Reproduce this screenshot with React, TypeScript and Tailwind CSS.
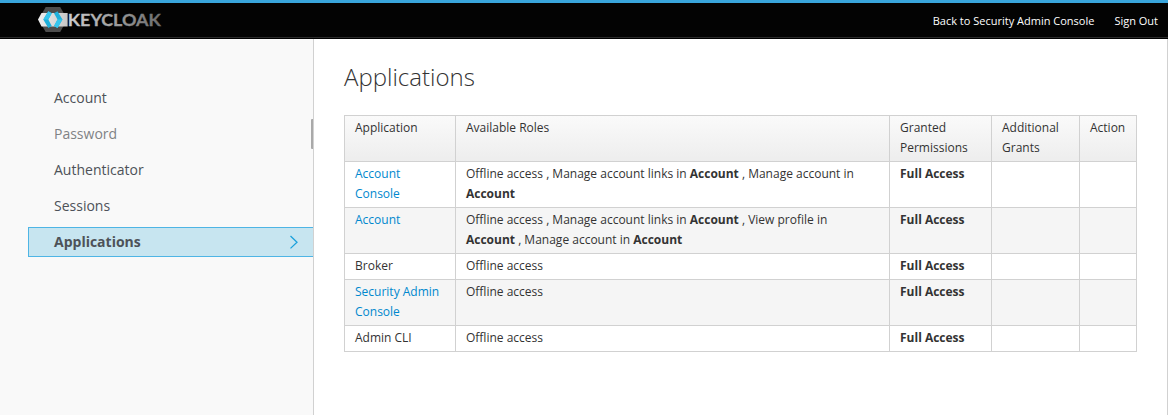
import React from 'react';

const navItems = ['Account', 'Password', 'Authenticator', 'Sessions', 'Applications'];

const cell = 'border border-[#d1d1d1] px-[10px] pt-[2px] pb-[3px] align-top text-left font-normal';

type Row = { name: string; link?: boolean; roles: React.ReactNode };

const rows: Row[] = [
  {
    name: 'Account Console',
    link: true,
    roles: (
      <>
        Offline access , Manage account links in <strong>Account</strong> , Manage account in <strong>Account</strong>
      </>
    ),
  },
  {
    name: 'Account',
    link: true,
    roles: (
      <>
        Offline access , Manage account links in <strong>Account</strong> , View profile in <strong>Account</strong> ,
        Manage account in <strong>Account</strong>
      </>
    ),
  },
  { name: 'Broker', roles: 'Offline access' },
  { name: 'Security Admin Console', link: true, roles: 'Offline access' },
  { name: 'Admin CLI', roles: 'Offline access' },
];

function Logo() {
  return (
    <svg width="126" height="27" viewBox="0 0 126 27" className="block">
      <defs>
        <linearGradient id="word" gradientUnits="userSpaceOnUse" x1="30" y1="0" x2="124" y2="0">
          <stop offset="0" stopColor="#cfcfcf" />
          <stop offset="1" stopColor="#6c6c6c" />
        </linearGradient>
        <linearGradient id="band" x1="0" y1="0" x2="1" y2="0">
          <stop offset="0" stopColor="#f0f0f0" />
          <stop offset="1" stopColor="#c6c6c6" />
        </linearGradient>
      </defs>
      <path d="M8.700 0H23.200L30.300 12.500L23.200 25H8.700L1.500 12.500Z" fill="#4d4d4d" />
      <path d="M4.500 6H30.600V19.500H4.500L1 12.500Z" fill="url(#band)" />
      <path d="M11.300 4.300L14.800 6.300L11.300 12.500L14.800 19L11.300 21L6.300 12.500Z" fill="#1fb0db" />
      <path d="M11.300 4.300L14.800 6.300L11.300 12.500H6.300Z" fill="#36c6ee" />
      <path d="M20.500 4.300L17 6.300L20.500 12.500L17 19L20.500 21L25.500 12.500Z" fill="#1fb0db" />
      <path d="M25.500 12.500H20.500L17 19L20.500 21Z" fill="#36c6ee" />
      <text
        x="30.800"
        y="19"
        textLength="93"
        lengthAdjust="spacingAndGlyphs"
        fill="url(#word)"
        stroke="url(#word)"
        strokeWidth="0.3"
        className="font-['Lato',sans-serif] text-[17.500px] font-bold"
      >
        KEYCLOAK
      </text>
    </svg>
  );
}

export default function App() {
  return (
    <div className="flex h-[415px] w-[1168px] flex-col overflow-hidden bg-white font-['Open_Sans',sans-serif] text-[12px] leading-[20px] text-[#333]">
      <header className="flex h-[39px] shrink-0 flex-col border-t-[3px] border-b border-t-[#39a5dc] border-b-black bg-[#030303]">
        <div className="flex flex-1 items-start justify-between border-b border-[#2b2b2b] pr-[10px] pl-[37px]">
          <div className="pt-[4px]">
            <Logo />
          </div>
          <nav className="flex gap-[20px] pt-[8px] text-[11px] text-white">
            <a>Back to Security Admin Console</a>
            <a>Sign Out</a>
          </nav>
        </div>
      </header>
      <div className="flex flex-1 border-r border-[#d1d1d1]">
        <aside className="w-[314px] shrink-0 border-r border-[#d1d1d1] bg-[#f9f9f9] pt-[44px] pl-[28px]">
          <ul className="flex flex-col gap-[6px] text-[14px] leading-[28px] text-[#4d5258]">
            {navItems.map((item) => {
              if (item === 'Applications') {
                return (
                  <li
                    key={item}
                    className="flex h-[30px] items-center justify-between border border-r-0 border-[#4eb5e5] bg-[#c7e5f0] pr-[14px] pl-[25px] font-bold"
                  >
                    {item}
                    <svg width="10" height="14" viewBox="0 0 10 14" fill="none" stroke="#1ba1dc" strokeWidth="1.3">
                      <path d="M1.500 1L8 7.200L1.500 13.400" />
                    </svg>
                  </li>
                );
              }
              if (item === 'Password') {
                return (
                  <li
                    key={item}
                    className="flex h-[30px] items-center justify-between pl-[26px] text-[#808285]"
                  >
                    {item}
                    <span className="h-[30px] w-[2px] rounded-l-[1px] bg-[#a9a9a9]" />
                  </li>
                );
              }
              return (
                <li key={item} className="flex h-[30px] items-center pl-[26px]">
                  {item}
                </li>
              );
            })}
          </ul>
        </aside>
        <main className="flex-1 pt-[24px] pl-[30px]">
          <h2 className="mb-[24px] text-[24px] leading-[28px] font-light">Applications</h2>
          <table className="w-[793px] table-fixed border-collapse">
            <colgroup>
              <col className="w-[111px]" />
              <col className="w-[434px]" />
              <col className="w-[102px]" />
              <col className="w-[88px]" />
              <col className="w-[57px]" />
            </colgroup>
            <thead className="bg-linear-to-b from-[#fafafa] to-[#ededed]">
              <tr>
                <th className={cell}>Application</th>
                <th className={cell}>Available Roles</th>
                <th className={cell}>Granted Permissions</th>
                <th className={cell}>Additional Grants</th>
                <th className={cell}>Action</th>
              </tr>
            </thead>
            <tbody>
              {rows.map((row) => (
                <tr key={row.name} className="even:bg-[#f5f5f5]">
                  <td className={cell}>{row.link ? <a className="text-[#0088ce]">{row.name}</a> : row.name}</td>
                  <td className={cell}>{row.roles}</td>
                  <td className={cell}>
                    <strong>Full Access</strong>
                  </td>
                  <td className={cell} />
                  <td className={cell} />
                </tr>
              ))}
            </tbody>
          </table>
        </main>
      </div>
    </div>
  );
}
